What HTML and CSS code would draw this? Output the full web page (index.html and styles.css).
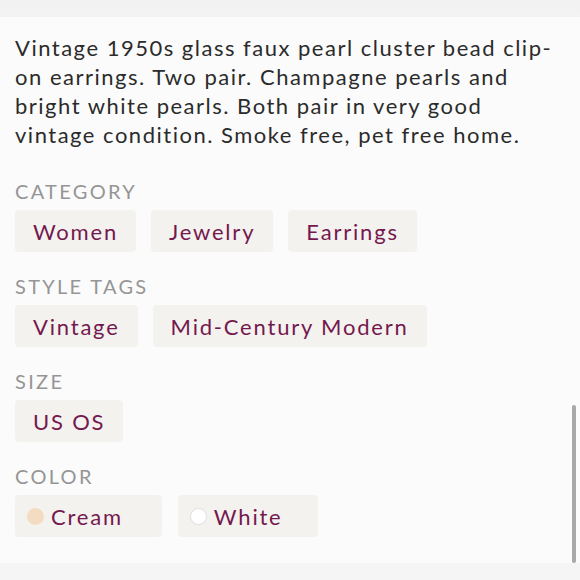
FILE: index.html
```html
<!DOCTYPE html>
<html>
<head>
<meta charset="utf-8">
<link rel="stylesheet" href="styles.css">
</head>
<body>
<div class="topbar"></div>
<main class="content">
  <p class="desc">Vintage 1950s glass faux pearl cluster bead clip-on earrings. Two pair. Champagne pearls and bright white pearls. Both pair in very good vintage condition. Smoke free, pet free home.</p>
  <section class="group">
    <h3 class="label">CATEGORY</h3>
    <div class="chips">
      <span class="chip">Women</span>
      <span class="chip">Jewelry</span>
      <span class="chip">Earrings</span>
    </div>
  </section>
  <section class="group">
    <h3 class="label">STYLE TAGS</h3>
    <div class="chips">
      <span class="chip">Vintage</span>
      <span class="chip">Mid-Century Modern</span>
    </div>
  </section>
  <section class="group">
    <h3 class="label">SIZE</h3>
    <div class="chips">
      <span class="chip">US OS</span>
    </div>
  </section>
  <section class="group">
    <h3 class="label">COLOR</h3>
    <div class="chips">
      <span class="chip chip-color"><span class="dot dot-cream"></span>Cream</span>
      <span class="chip chip-color"><span class="dot dot-white"></span>White</span>
    </div>
  </section>
</main>
<div class="bottombar"></div>
<div class="scrollbar"></div>
</body>
</html>
```
FILE: styles.css
```css
html, body {
  margin: 0;
  padding: 0;
  height: 100%;
  overflow: hidden;
}
body {
  background: #fbfbfb;
  font-family: Lato, "Open Sans", sans-serif;
  position: relative;
  display: flex;
  flex-direction: column;
}
.topbar {
  height: 17px;
  background: linear-gradient(#f1f1f1, #f3f3f3);
  flex: none;
}
.content {
  flex: 1;
  padding: 16px 15px 0 15px;
}
.desc {
  margin: 0;
  font-size: 22px;
  line-height: 29px;
  letter-spacing: 1.5px;
  color: #2b2b2b;
}
.group {
  margin-top: 22px;
}
.group:first-of-type {
  margin-top: 30px;
}
.label {
  margin: 0;
  font-weight: 400;
  font-size: 20px;
  line-height: 24px;
  letter-spacing: 2.3px;
  color: #959595;
}
.chips {
  display: flex;
  gap: 15px;
  margin-top: 7px;
}
.chip {
  display: inline-flex;
  align-items: center;
  height: 42px;
  padding: 0 18px;
  background: #f4f2ef;
  border-radius: 4px;
  font-size: 22px;
  letter-spacing: 1.8px;
  color: #74194e;
}
.chip-color {
  padding-left: 12px;
  padding-right: 39px;
}
.chip-color + .chip-color {
  margin-left: 1px;
  padding-right: 35px;
}
.dot {
  width: 17px;
  height: 17px;
  border-radius: 50%;
  margin-right: 7px;
  box-sizing: border-box;
}
.dot-cream {
  background: #f3dcc1;
}
.dot-white {
  background: #ffffff;
  border: 1px solid #dedede;
}
.bottombar {
  height: 17px;
  background: #f5f5f5;
  flex: none;
}
.scrollbar {
  position: absolute;
  right: 4px;
  top: 405px;
  width: 4px;
  height: 158px;
  background: #a8a8a8;
  border-radius: 2px;
}
```
